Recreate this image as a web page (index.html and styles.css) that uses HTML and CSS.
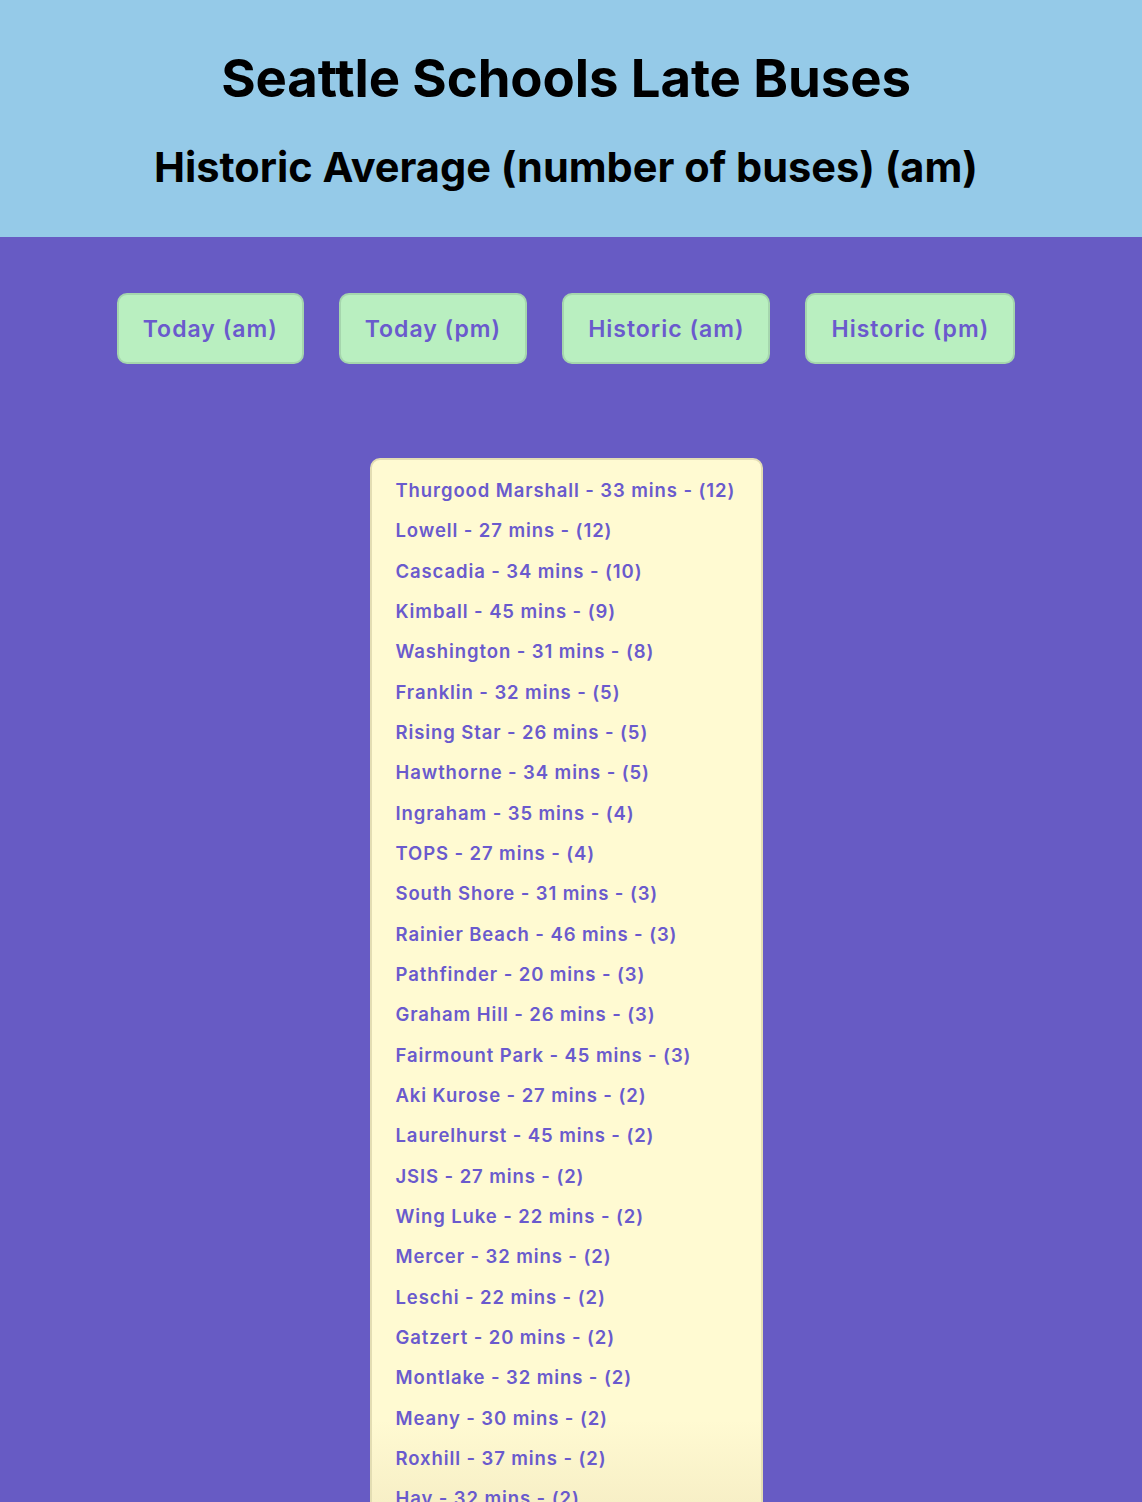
FILE: index.html
```html
<!DOCTYPE html>
<html>
<head>
<meta charset="utf-8">
<link rel="stylesheet" href="styles.css">
</head>
<body>
<header class="header">
  <h1 class="title">Seattle Schools Late Buses</h1>
  <h2 class="subtitle">Historic Average (number of buses) (am)</h2>
</header>
<main class="main">
  <nav class="buttons">
    <button class="btn">Today (am)</button>
    <button class="btn">Today (pm)</button>
    <button class="btn">Historic (am)</button>
    <button class="btn">Historic (pm)</button>
  </nav>
  <div class="list-wrap">
    <ul class="list">
      <li>Thurgood Marshall - 33 mins - (12)</li>
      <li>Lowell - 27 mins - (12)</li>
      <li>Cascadia - 34 mins - (10)</li>
      <li>Kimball - 45 mins - (9)</li>
      <li>Washington - 31 mins - (8)</li>
      <li>Franklin - 32 mins - (5)</li>
      <li>Rising Star - 26 mins - (5)</li>
      <li>Hawthorne - 34 mins - (5)</li>
      <li>Ingraham - 35 mins - (4)</li>
      <li>TOPS - 27 mins - (4)</li>
      <li>South Shore - 31 mins - (3)</li>
      <li>Rainier Beach - 46 mins - (3)</li>
      <li>Pathfinder - 20 mins - (3)</li>
      <li>Graham Hill - 26 mins - (3)</li>
      <li>Fairmount Park - 45 mins - (3)</li>
      <li>Aki Kurose - 27 mins - (2)</li>
      <li>Laurelhurst - 45 mins - (2)</li>
      <li>JSIS - 27 mins - (2)</li>
      <li>Wing Luke - 22 mins - (2)</li>
      <li>Mercer - 32 mins - (2)</li>
      <li>Leschi - 22 mins - (2)</li>
      <li>Gatzert - 20 mins - (2)</li>
      <li>Montlake - 32 mins - (2)</li>
      <li>Meany - 30 mins - (2)</li>
      <li>Roxhill - 37 mins - (2)</li>
      <li>Hay - 32 mins - (2)</li>
    </ul>
  </div>
</main>
</body>
</html>
```

FILE: styles.css
```css
html, body {
  margin: 0;
  padding: 0;
}
body {
  font-family: Inter, "Noto Sans", "Liberation Sans", sans-serif;
  background: #675bc4;
  height: 1502px;
  overflow: hidden;
}
.header {
  background: #95cae8;
  height: 237px;
  padding-right: 10px;
  display: flex;
  flex-direction: column;
  align-items: center;
  box-sizing: border-box;
}
.title {
  margin: 47px 0 0;
  font-size: 52.7px;
  font-weight: 700;
  line-height: 62px;
  color: #000;
  letter-spacing: -0.1px;
}
.subtitle {
  margin: 34px 0 0;
  font-size: 41.5px;
  font-weight: 700;
  line-height: 48px;
  color: #000;
}
.main {
  padding-right: 10px;
  display: flex;
  flex-direction: column;
  align-items: center;
}
.buttons {
  display: flex;
  gap: 35px;
  margin-top: 56px;
}
.btn {
  font-family: inherit;
  height: 71px;
  padding: 0 24px;
  background: #b9efc0;
  border: 2px solid #a5d6ad;
  border-radius: 10px;
  color: #6a5acd;
  font-size: 23px;
  font-weight: 600;
  letter-spacing: 1px;
}
.list-wrap {
  margin-top: 94px;
  width: 393px;
  box-sizing: border-box;
  background: linear-gradient(to bottom, #fffad2 0, #fffad2 960px, #f7efc6 1044px);
  border: 2px solid #e3ddb3;
  border-radius: 10px;
  height: 1100px;
}
.list {
  list-style: none;
  margin: 0;
  padding: 10px 0 0 24px;
}
.list li {
  color: #6a5acd;
  font-size: 18.5px;
  font-weight: 600;
  line-height: 40.33px;
  letter-spacing: 0.9px;
  white-space: nowrap;
}
```
